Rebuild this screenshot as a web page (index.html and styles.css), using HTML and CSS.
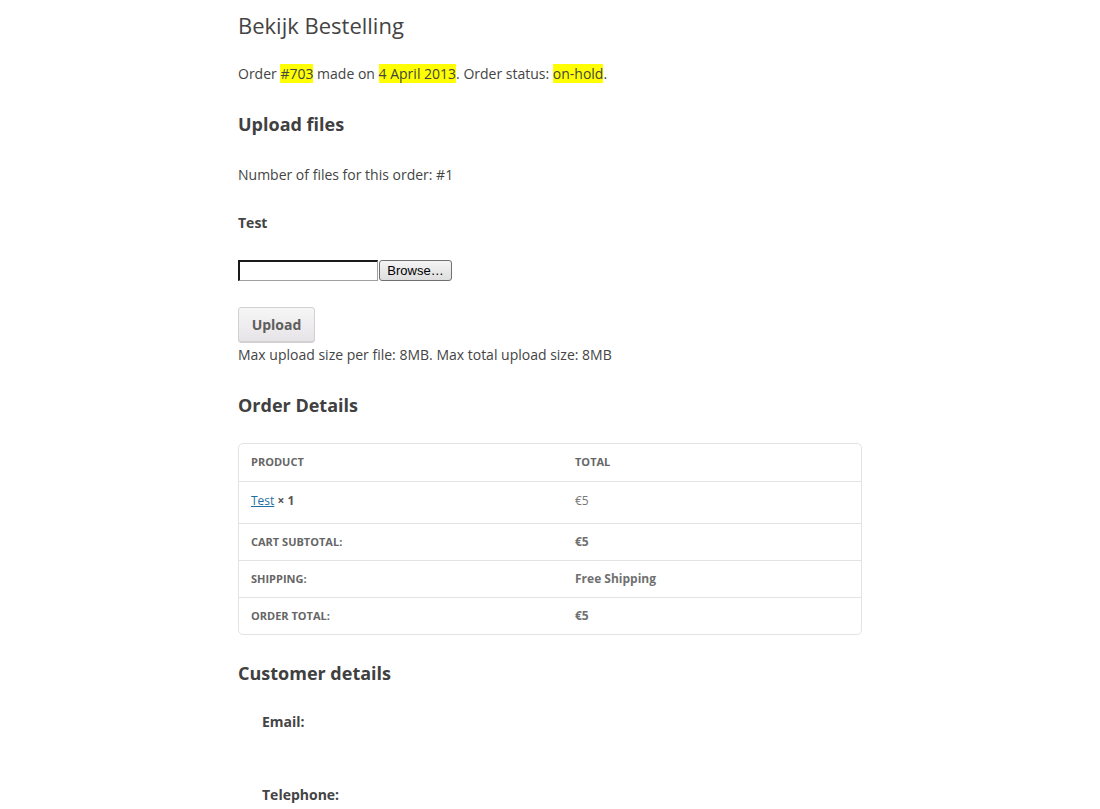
FILE: index.html
```html
<!DOCTYPE html>
<html>
<head>
<meta charset="utf-8">
<link rel="stylesheet" href="styles.css">
</head>
<body>
<main class="page">
  <h1 class="title">Bekijk Bestelling</h1>
  <p class="order-line">Order <mark>#703</mark> made on <mark>4 April 2013</mark>. Order status: <mark>on-hold</mark>.</p>

  <h2 class="section upload-h">Upload files</h2>
  <p class="num-files">Number of files for this order: #1</p>
  <p class="file-label">Test</p>
  <div class="file-row">
    <span class="file-box"></span>
    <span class="browse">Browse…</span>
  </div>
  <button class="upload-btn" type="button">Upload</button>
  <p class="max-size">Max upload size per file: 8MB. Max total upload size: 8MB</p>

  <h2 class="section details-h">Order Details</h2>
  <table class="order-table">
    <thead>
      <tr class="head-row"><th class="c1">Product</th><th class="c2">Total</th></tr>
    </thead>
    <tbody>
      <tr class="item-row"><td class="c1"><a href="#">Test</a> <strong>× 1</strong></td><td class="c2 price">€5</td></tr>
    </tbody>
    <tfoot>
      <tr class="foot-row"><th class="c1">Cart Subtotal:</th><td class="c2 strongv">€5</td></tr>
      <tr class="foot-row"><th class="c1">Shipping:</th><td class="c2 strongv">Free Shipping</td></tr>
      <tr class="foot-row"><th class="c1">Order Total:</th><td class="c2 strongv">€5</td></tr>
    </tfoot>
  </table>

  <h2 class="section customer-h">Customer details</h2>
  <dl class="customer">
    <dt class="email">Email:</dt>
    <dt class="phone">Telephone:</dt>
  </dl>
</main>
</body>
</html>
```

FILE: styles.css
```css
html, body {
  margin: 0;
  padding: 0;
  background: #ffffff;
}
body {
  font-family: "Open Sans", "Noto Sans", sans-serif;
  color: #444444;
  font-size: 14px;
}
.page {
  width: 624px;
  margin-left: 238px;
  padding-top: 10px;
}
.title {
  font-size: 22px;
  font-weight: 400;
  line-height: 30px;
  margin: 0;
  color: #444444;
}
p {
  margin: 0;
  line-height: 24px;
}
mark {
  background: #ffff00;
  color: #444444;
}
.order-line { margin-top: 22px; }
.section {
  font-size: 18px;
  font-weight: 700;
  line-height: 26px;
  margin: 0;
  color: #404040;
}
.upload-h { margin-top: 25px; }
.num-files { margin-top: 26px; }
.file-label { margin-top: 24px; font-weight: 700; }
.file-row {
  margin-top: 25px;
  display: flex;
  height: 21px;
  gap: 1px;
}
.file-box {
  box-sizing: border-box;
  width: 140px;
  height: 21px;
  border-top: 2px solid #1a1a1a;
  border-left: 2px solid #1a1a1a;
  border-right: 1px solid #a0a0a0;
  border-bottom: 1px solid #a0a0a0;
  background: #fff;
}
.browse {
  box-sizing: border-box;
  width: 73px;
  height: 21px;
  border: 1px solid #707070;
  border-radius: 3px;
  background: linear-gradient(#f4f4f4, #dedede);
  font-family: "Liberation Sans", Arial, sans-serif;
  font-size: 13px;
  color: #000;
  line-height: 19px;
  text-align: center;
}
.upload-btn {
  display: block;
  margin-top: 26px;
  box-sizing: border-box;
  width: 77px;
  height: 36px;
  padding: 0;
  border: 1px solid #d4d0d0;
  border-radius: 3px;
  background: linear-gradient(#f7f6f7, #e6e3e6);
  box-shadow: inset 0 -1px 0 rgba(0,0,0,0.08);
  font-family: "Open Sans", "Noto Sans", sans-serif;
  font-size: 14px;
  font-weight: 700;
  color: #5e5e5e;
  line-height: 32px;
}
.max-size { margin-top: 0; }
.details-h { margin-top: 25px; }
.order-table {
  margin-top: 25px;
  width: 624px;
  border: 1px solid #e3e3e3;
  border-radius: 5px;
  border-collapse: separate;
  border-spacing: 0;
  font-size: 12px;
  color: #666;
}
.order-table th,
.order-table td {
  text-align: left;
  padding: 0 12px;
  border-top: 1px solid #e3e3e3;
  vertical-align: middle;
}
.order-table thead th { border-top: 0; }
.c1 { width: 300px; }
.head-row { height: 37px; }
.head-row th {
  font-size: 11px;
  font-weight: 700;
  text-transform: uppercase;
  color: #666;
  padding-bottom: 2px;
}
.item-row { height: 42px; }
.item-row td { padding-bottom: 4px; }
.item-row a { color: #1e6fa0; text-decoration: underline; }
.item-row strong { font-weight: 700; color: #555; }
.price { color: #777; }
.foot-row { height: 37px; }
.foot-row th,
.foot-row td { padding-bottom: 1px; }
.foot-row th {
  font-size: 11px;
  font-weight: 700;
  text-transform: uppercase;
  color: #666;
}
.strongv { font-weight: 700; color: #707070; }
.customer-h { margin-top: 25px; }
.customer {
  margin: 24px 0 0 24px;
}
.customer dt {
  font-weight: 700;
  line-height: 24px;
}
.phone { margin-top: 49px; }
```
